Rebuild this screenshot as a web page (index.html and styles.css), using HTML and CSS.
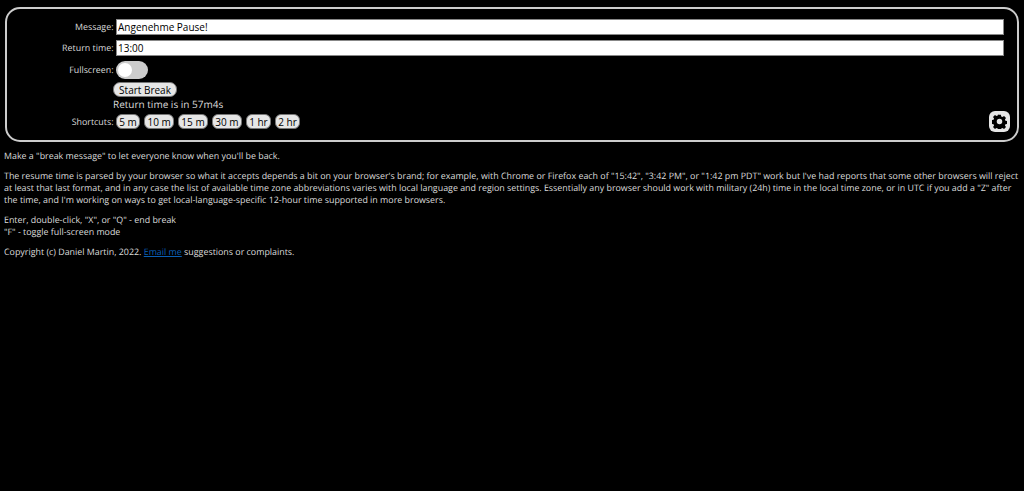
FILE: index.html
```html
<!DOCTYPE html>
<html lang="en">
<head>
    <meta charset="UTF-8">
    <title>Break Timer</title>
    <link rel="stylesheet" href="styles.css">
</head>
<body>
    <div class="panel">
        <div class="form-row input-row">
            <label class="form-label">Message:</label>
            <input class="text-input" type="text" value="Angenehme Pause!">
        </div>
        <div class="form-row input-row">
            <label class="form-label">Return time:</label>
            <input class="text-input" type="text" value="13:00">
        </div>
        <div class="form-row toggle-row">
            <label class="form-label">Fullscreen:</label>
            <div class="toggle"><span class="knob"></span></div>
        </div>
        <div class="start-col">
            <button class="btn start-btn">Start Break</button>
            <div class="return-note">Return time is in 57m4s</div>
        </div>
        <div class="form-row">
            <label class="form-label">Shortcuts:</label>
            <div class="shortcuts">
                <button class="btn">5 m</button>
                <button class="btn">10 m</button>
                <button class="btn">15 m</button>
                <button class="btn">30 m</button>
                <button class="btn">1 hr</button>
                <button class="btn">2 hr</button>
            </div>
        </div>
        <button class="settings-btn" aria-label="Settings">
            <svg viewBox="0 0 24 24" width="15" height="15">
                <path fill="#000" fill-rule="evenodd" d="M9.8 1h4.4l.6 3 1.9.8 2.6-1.7 3.1 3.1-1.7 2.6.8 1.9 3 .6v4.4l-3 .6-.8 1.9 1.7 2.6-3.1 3.1-2.6-1.7-1.9.8-.6 3H9.8l-.6-3-1.9-.8-2.6 1.7-3.1-3.1 1.7-2.6-.8-1.9-3-.6V9.8l3-.6.8-1.9-1.7-2.6 3.1-3.1 2.6 1.7 1.9-.8.6-3zM12 7.6a4.4 4.4 0 1 0 0 8.8 4.4 4.4 0 0 0 0-8.8z"/>
            </svg>
        </button>
    </div>

    <div class="help">
        <p>Make a "break message" to let everyone know when you'll be back.</p>
        <p>The resume time is parsed by your browser so what it accepts depends a bit on your browser's brand; for example, with Chrome or Firefox each of "15:42", "3:42 PM", or "1:42 pm PDT" work but I've had reports that some other browsers will reject at least that last format, and in any case the list of available time zone abbreviations varies with local language and region settings. Essentially any browser should work with military (24h) time in the local time zone, or in UTC if you add a "Z" after the time, and I'm working on ways to get local-language-specific 12-hour time supported in more browsers.</p>
        <p>Enter, double-click, "X", or "Q" - end break<br>"F" - toggle full-screen mode</p>
        <p>Copyright (c) Daniel Martin, 2022. <a href="#">Email me</a> suggestions or complaints.</p>
    </div>
</body>
</html>
```

FILE: styles.css
```css
html, body {
    height: 100%;
}
body {
    margin: 0;
    padding: 7px 4px 0;
    box-sizing: border-box;
    background: #000;
    color: #dcdcdc;
    font-family: "Open Sans", sans-serif;
    font-size: 8.9px;
    font-weight: 500;
    line-height: 12px;
    text-rendering: geometricPrecision;
    overflow: hidden;
}
.panel {
    position: relative;
    margin: 0 1px;
    height: 135px;
    box-sizing: border-box;
    border: 2px solid #ccc;
    border-radius: 15px;
    padding: 10px 13px 0 0;
}
.form-row {
    display: flex;
    align-items: center;
    gap: 2.5px;
}
.input-row {
    height: 15.5px;
    margin-bottom: 5.5px;
}
.toggle-row {
    margin-bottom: 3px;
}
.form-label {
    flex: none;
    width: 106.5px;
    text-align: right;
}
.text-input {
    flex: 1;
    min-width: 0;
    box-sizing: border-box;
    height: 100%;
    padding: 0 1px;
    border: 1px solid #888;
    background: #fff;
    color: #000;
    font-family: inherit;
    font-size: 10px;
    font-weight: 500;
}
.toggle {
    width: 32px;
    height: 18px;
    border-radius: 9px;
    background: #ccc;
    display: flex;
    align-items: center;
    padding-left: 2px;
    box-sizing: border-box;
}
.knob {
    width: 14px;
    height: 14px;
    border-radius: 50%;
    background: #fff;
}
.start-col {
    margin-left: 106px;
    font-size: 10px;
}
.btn {
    height: 15px;
    padding: 0 2.3px;
    border: 1px solid #777;
    border-radius: 6px;
    background: #e6e6e6;
    color: #000;
    font-family: inherit;
    font-size: 10px;
    font-weight: 500;
    line-height: 12px;
}
.start-btn {
    display: block;
    width: 64px;
    padding: 0;
    border-radius: 7px;
}
.return-note {
    line-height: 14px;
    margin-bottom: 3px;
}
.shortcuts {
    display: flex;
    gap: 4px;
}
.settings-btn {
    position: absolute;
    right: 7px;
    bottom: 8px;
    width: 21px;
    height: 21px;
    padding: 0;
    border: none;
    border-radius: 6px;
    background: #e6e6e6;
    display: flex;
    align-items: center;
    justify-content: center;
}
.help {
    margin-top: 8px;
}
.help p {
    margin: 0 0 8px;
}
a {
    color: #0a5fb4;
}
```
